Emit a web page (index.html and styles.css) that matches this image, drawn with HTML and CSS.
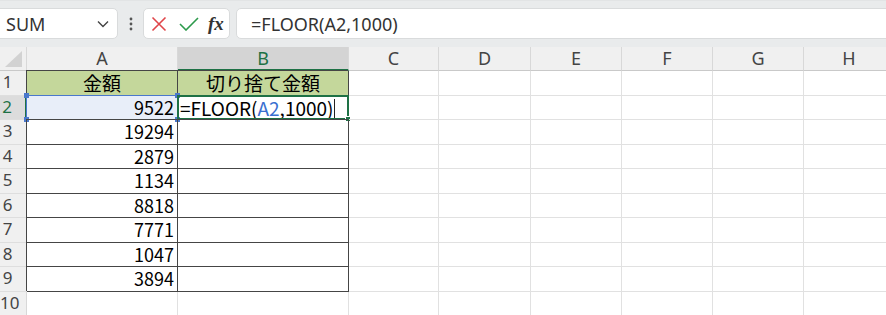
FILE: index.html
```html
<!DOCTYPE html>
<html lang="ja">
<head>
    <meta charset="UTF-8" />
    <title>FLOOR</title>
    <link rel="stylesheet" href="styles.css">
</head>
<body>
    <div class="toolbar">
      <div class="namebox">
        <span>SUM</span>
        <svg class="chev" width="12" height="8" viewBox="0 0 12 8"><path d="M1 1.5 L6 6.5 L11 1.5" fill="none" stroke="#444" stroke-width="1.4"/></svg>
      </div>
      <svg class="dots" width="4" height="14" viewBox="0 0 4 14"><circle cx="2" cy="2" r="1.4" fill="#555"/><circle cx="2" cy="7" r="1.4" fill="#555"/><circle cx="2" cy="12" r="1.4" fill="#555"/></svg>
      <div class="btns">
        <svg width="16" height="16" viewBox="0 0 16 16"><path d="M1.5 1.5 L14.5 14.5 M14.5 1.5 L1.5 14.5" stroke="#e0464a" stroke-width="1.6" fill="none"/></svg>
        <svg width="20" height="14" viewBox="0 0 20 14"><path d="M1 7 L7 13 L19 1" stroke="#2d9a4c" stroke-width="1.6" fill="none"/></svg>
        <span class="fx">fx</span>
      </div>
      <div class="formula">=FLOOR(A2,1000)</div>
    </div>

    <div class="sheet">
      <div class="hd corner"><span class="tri"></span></div>
      <div class="hd col">A</div>
      <div class="hd col sel">B</div>
      <div class="hd col">C</div>
      <div class="hd col">D</div>
      <div class="hd col">E</div>
      <div class="hd col">F</div>
      <div class="hd col">G</div>
      <div class="hd col">H</div>
      <div class="hd col"></div>

      <div class="hd row">1</div>
      <div class="c tb green">金額</div>
      <div class="c tb green">切り捨て金額</div>
      <div class="c"></div><div class="c"></div><div class="c"></div><div class="c"></div><div class="c"></div><div class="c"></div><div class="c"></div>

      <div class="hd row sel">2</div>
      <div class="c tb num refcell">9522<span class="refbox"><i class="h tl"></i><i class="h tr"></i><i class="h bl"></i><i class="h br"></i></span></div>
      <div class="c tb edit">=FLOOR(<span class="ref">A2</span>,1000)<span class="caret"></span><span class="active"><i class="h gbr"></i></span></div>
      <div class="c"></div><div class="c"></div><div class="c"></div><div class="c"></div><div class="c"></div><div class="c"></div><div class="c"></div>

      <div class="hd row">3</div>
      <div class="c tb num">19294</div><div class="c tb"></div>
      <div class="c"></div><div class="c"></div><div class="c"></div><div class="c"></div><div class="c"></div><div class="c"></div><div class="c"></div>

      <div class="hd row">4</div>
      <div class="c tb num">2879</div><div class="c tb"></div>
      <div class="c"></div><div class="c"></div><div class="c"></div><div class="c"></div><div class="c"></div><div class="c"></div><div class="c"></div>

      <div class="hd row">5</div>
      <div class="c tb num">1134</div><div class="c tb"></div>
      <div class="c"></div><div class="c"></div><div class="c"></div><div class="c"></div><div class="c"></div><div class="c"></div><div class="c"></div>

      <div class="hd row">6</div>
      <div class="c tb num">8818</div><div class="c tb"></div>
      <div class="c"></div><div class="c"></div><div class="c"></div><div class="c"></div><div class="c"></div><div class="c"></div><div class="c"></div>

      <div class="hd row">7</div>
      <div class="c tb num">7771</div><div class="c tb"></div>
      <div class="c"></div><div class="c"></div><div class="c"></div><div class="c"></div><div class="c"></div><div class="c"></div><div class="c"></div>

      <div class="hd row">8</div>
      <div class="c tb num">1047</div><div class="c tb"></div>
      <div class="c"></div><div class="c"></div><div class="c"></div><div class="c"></div><div class="c"></div><div class="c"></div><div class="c"></div>

      <div class="hd row">9</div>
      <div class="c tb num">3894</div><div class="c tb"></div>
      <div class="c"></div><div class="c"></div><div class="c"></div><div class="c"></div><div class="c"></div><div class="c"></div><div class="c"></div>

      <div class="hd row">10</div>
      <div class="c"></div><div class="c"></div>
      <div class="c"></div><div class="c"></div><div class="c"></div><div class="c"></div><div class="c"></div><div class="c"></div><div class="c"></div>
    </div>
</body>
</html>
```

FILE: styles.css
```css
* {
    box-sizing: border-box;
}

body {
    margin: 0;
    width: 886px;
    height: 315px;
    overflow: hidden;
    background-color: #ffffff;
    font-family: "Noto Sans", "Noto Sans CJK JP", sans-serif;
}

.toolbar {
    height: 47px;
    padding-top: 7px;
    padding-bottom: 8px;
    display: flex;
    align-items: stretch;
    background-color: #e9ebec;
    border-top: 1px solid #e2e4e5;
}

.namebox {
    width: 123px;
    margin-left: -5px;
    padding: 0 8px 0 10px;
    display: flex;
    align-items: center;
    justify-content: space-between;
    background-color: #ffffff;
    border: 1px solid #d9dbdc;
    border-radius: 5px;
    font-size: 18px;
    color: #333;
}

.dots {
    align-self: center;
    margin: 0 10px 0 11px;
}

.btns {
    width: 87px;
    display: flex;
    align-items: center;
    gap: 12px;
    padding-left: 7px;
    background-color: #ffffff;
    border: 1px solid #d9dbdc;
    border-radius: 5px;
}

.fx {
    font-family: "Liberation Serif", serif;
    font-style: italic;
    font-weight: bold;
    font-size: 19px;
    color: #333;
    margin-left: -3px;
}

.formula {
    flex: 1;
    margin-left: 6px;
    margin-right: -6px;
    padding-left: 14px;
    display: flex;
    align-items: center;
    background-color: #ffffff;
    border: 1px solid #d9dbdc;
    border-radius: 5px;
    font-size: 18px;
    color: #333;
}

.sheet {
    display: grid;
    grid-template-columns: 27px 151px 171px 90px 92px 91px 91px 91px 91px 1fr;
    grid-template-rows: 24px repeat(10, 24.5px);
}

.hd {
    background-color: #f0f0f0;
    border-right: 1px solid #d8d8d8;
    border-bottom: 1px solid #c9c9c9;
    color: #444;
    font-size: 17px;
    line-height: 22px;
}

.hd.col {
    text-align: center;
    font-size: 18px;
}

.hd.col.sel {
    background-color: #d4d4d4;
    color: #1e7145;
    border-bottom: 2px solid #1e7145;
}

.hd.row {
    padding-right: 11px;
    text-align: center;
    border-bottom-color: #dedede;
}

.hd.row.sel {
    background-color: #dcdcdc;
    color: #1e7145;
    border-right: 2px solid #1e7145;
}

.corner {
    position: relative;
}

.tri {
    position: absolute;
    right: 4px;
    bottom: 3px;
    width: 0;
    height: 0;
    border-left: 17px solid transparent;
    border-bottom: 16px solid #d2d2d2;
}

.c {
    position: relative;
    border-right: 1px solid #e1e1e1;
    border-bottom: 1px solid #e1e1e1;
    font-family: "Noto Sans CJK JP", sans-serif;
    font-size: 18px;
    line-height: 23px;
    color: #000;
    white-space: nowrap;
}

.tb {
    border-right-color: #454545;
    border-bottom-color: #454545;
    box-shadow: -1px -1px 0 #454545;
}

.green {
    background-color: #c4d79b;
    text-align: center;
    font-size: 19px;
}

.num {
    text-align: right;
    padding-right: 3px;
}

.refcell {
    background-color: #e8eef9;
}

.refbox {
    position: absolute;
    left: -1px;
    top: -1px;
    right: -1px;
    bottom: -1px;
    border: 1px solid #4a78cc;
}

.h {
    position: absolute;
    width: 5px;
    height: 5px;
    background-color: #4a78cc;
}

.tl { left: -3px; top: -3px; }
.tr { right: -3px; top: -3px; }
.bl { left: -3px; bottom: -3px; }
.br { right: -3px; bottom: -3px; }

.edit {
    padding-left: 2px;
    font-size: 19px;
}

.ref {
    color: #3a6fd0;
}

.caret {
    display: inline-block;
    width: 1px;
    height: 21px;
    margin-left: 1px;
    vertical-align: -4px;
    background-color: #222;
}

.active {
    position: absolute;
    left: -1px;
    top: -1px;
    right: -1px;
    bottom: -1px;
    border: 2px solid #1e7145;
}

.gbr {
    right: -4px;
    bottom: -4px;
    background-color: #1e7145;
    border: 1px solid #ffffff;
    width: 6px;
    height: 6px;
}
```
